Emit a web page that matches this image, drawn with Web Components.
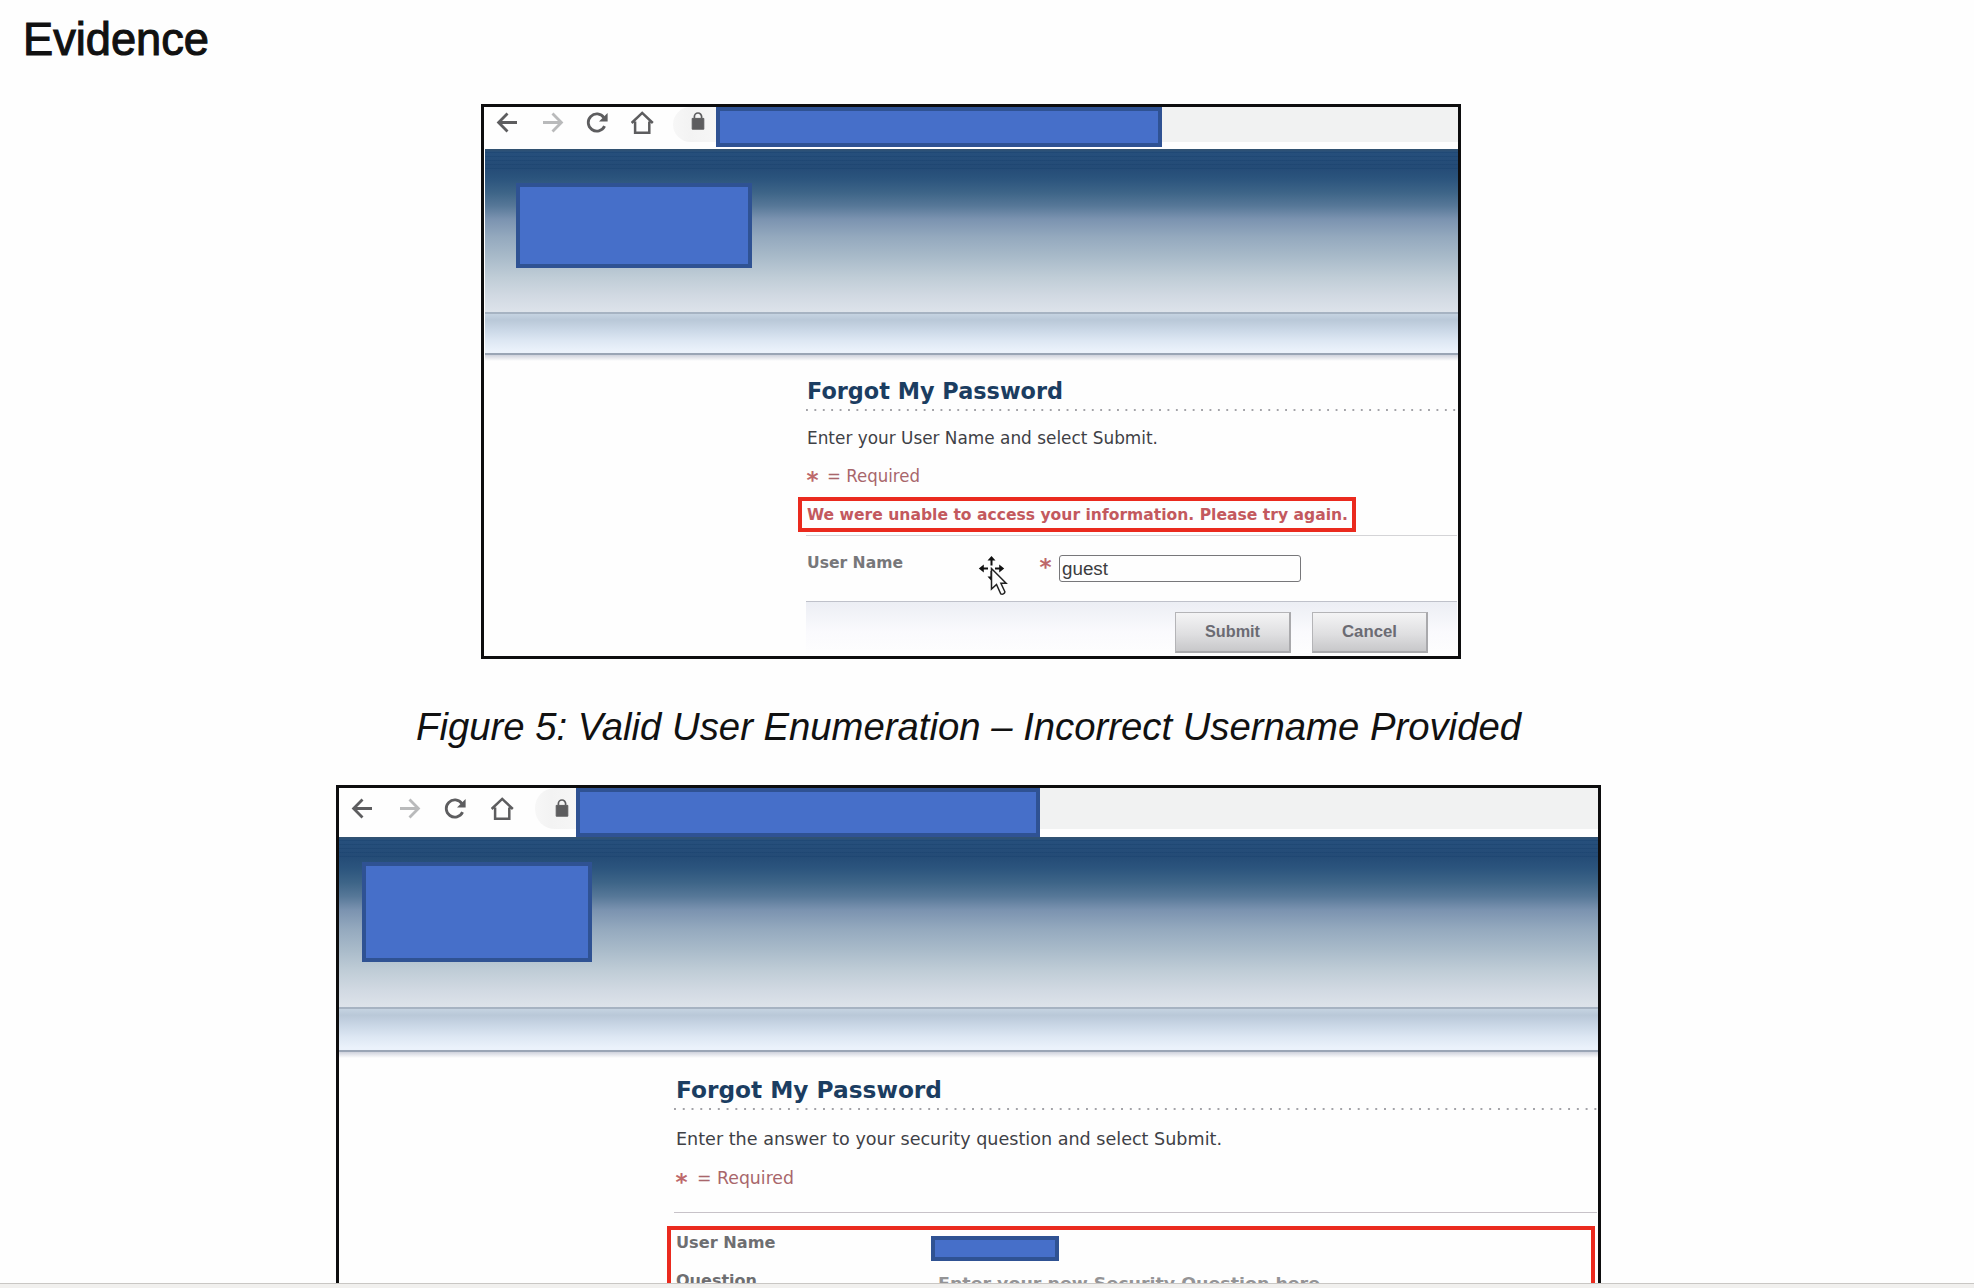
<!DOCTYPE html>
<html lang="en">
<head>
<meta charset="utf-8">
<title>Evidence</title>
<style>
html,body{margin:0;height:100%;overflow:hidden;background:#fefefe}
</style>
</head>
<body>
<report-page></report-page>
<script>
const define=(name,html,after)=>customElements.define(name,class extends HTMLElement{
  connectedCallback(){
    if(this.shadowRoot)return;
    this.attachShadow({mode:'open'}).innerHTML=typeof html==='function'?html(this):html;
    if(after)after(this);
  }
});

/* One line of text, condensed or widened to a given measure. */
define('fit-text',`<style>
:host{display:block;flex:none;white-space:nowrap;line-height:20px;height:20px}
span{display:inline-block;transform-origin:0 0}
</style><span><slot></slot></span>`,el=>{
  const w=+el.getAttribute('w'),s=el.shadowRoot.querySelector('span');
  el.style.width=w+'px';
  s.style.transform=`scaleX(${w/s.getBoundingClientRect().width})`;
});

define('redacted-box',`<style>
:host{display:block;flex:none;box-sizing:border-box;background:#466fc9;border:4px solid #2f5293}
</style>`);

const icons={
  back:'<path d="M21 11.5H3M11.5 2.5 2.6 11.5l8.9 9"/>',
  forward:'<path d="M2 11.5h18M11.5 2.5l8.9 9-8.9 9"/>',
  reload:'<path d="M18.6 15.2a8.6 8.6 0 1 1-.7-8.6"/><path d="M21.6 2v8.6H13z" fill="currentColor" stroke="none"/>',
  home:'<path d="M.6 12 11.2 1.9 21.8 12M4.1 10.5v11.3h14.2V10.5" stroke-width="2.5"/>',
  lock:'<path d="M6.2 9.4h11.6v10.8H6.2z" fill="currentColor" stroke-width="1"/><path d="M8.4 9V7.6a3.6 3.6 0 0 1 7.2 0V9" stroke-width="1.7"/>'
};
define('tool-icon',el=>`<style>
:host{display:block;flex:none;width:24px;height:24px;color:#5d5d5f}
:host([name=forward]){color:#b9babb}
svg{display:block;fill:none;stroke:currentColor;stroke-width:2.8}
</style><svg width="24" height="24" viewBox="0 0 24 24">${icons[el.getAttribute('name')]}</svg>`);

define('browser-bar',`<style>
:host{display:flex;align-items:flex-start;background:#fefefe;height:var(--bar-h)}
.nav{display:flex;gap:var(--gap);padding:var(--nav-top) 0 0 var(--nav-left);flex:none;box-sizing:border-box;width:var(--nav-w)}
.lock{flex:none;box-sizing:border-box;width:var(--lock-w);height:var(--pill-h);background:linear-gradient(90deg,#f7f7f7,#f3f3f3 40%,#f6f6f6);border-radius:20px 0 0 20px;padding:var(--lock-top) 0 0 var(--lock-left)}
redacted-box{width:var(--addr-w);height:var(--addr-h)}
.rest{flex:1;height:var(--pill-h);background:#f1f2f2}
</style>
<div class="nav"><tool-icon name="back"></tool-icon><tool-icon name="forward"></tool-icon><tool-icon name="reload"></tool-icon><tool-icon name="home"></tool-icon></div>
<div class="lock"><tool-icon name="lock"></tool-icon></div>
<redacted-box></redacted-box><div class="rest"></div>`);

define('site-banner',`<style>
:host{display:block;margin-left:var(--banner-left)}
.sky{box-sizing:border-box;height:var(--sky-h);padding:var(--logo-top) 0 0 var(--logo-left);
 background:repeating-linear-gradient(#17406c66 0 1px,transparent 1px 4px) 0 3px/100% 17px no-repeat,
 linear-gradient(#33526f 0,#264f7c 2%,#244b76 11%,#2b547d 18%,#3e6588 27%,#577898 35%,#7b93b0 43%,#94a9be 54%,#a8bac9 66%,#c0cdd7 79%,#d1d9e2 90%,#dde3ea)}
redacted-box{width:var(--logo-w);height:var(--logo-h)}
.band{height:var(--band-h);border:2px solid #9aa5b5;border-width:2px 0;border-top-color:#a6b3c2;background:linear-gradient(#c5d3e1 0,#b9c8d8 15%,#cbd8e7 42%,#dde7f3 68%,#ebf2fb 95%)}
.shade{height:6px;margin-bottom:-6px;background:linear-gradient(#cfd2dc,#fefefe)}
</style><div class="sky"><redacted-box></redacted-box></div><div class="band"></div><div class="shade"></div>`);

define('dotted-rule',`<style>
:host{display:block;height:2px;background:linear-gradient(90deg,#a3a3a8 2px,transparent 2px) 0 0/var(--dot) 2px repeat-x}
</style>`);

define('required-star',`<style>
:host{display:block;flex:none;width:12px;height:20px;font:bold 23px/20px "DejaVu Sans",sans-serif;color:#bd686b}
span{display:block;padding-top:4px}
</style><span>*</span>`);

define('required-note',`<style>
:host{display:flex;color:#a8666b;font-size:17px}
fit-text{margin-left:8px}
</style><required-star></required-star><fit-text></fit-text>`.replace('<fit-text></fit-text>','<slot></slot>'));

define('push-button',`<style>
:host{display:flex;justify-content:center;box-sizing:border-box;height:41px;padding-top:8px;border:1px solid #b4b4b7;border-right:2px solid #a9a9ac;border-bottom:2px solid #aaaaad;background:linear-gradient(#f4f4f5,#dfdfe1 55%,#c8c8ca);font:bold 17.3px "Liberation Sans",Arial,sans-serif;color:#6b6b73}
</style><fit-text w="55"><slot></slot></fit-text>`);

define('move-cursor',`<style>:host{display:block;position:absolute;left:494px;top:448px}svg{display:block}</style>
<svg width="30" height="42" viewBox="0 0 30 42"><g fill="none" stroke="#111" stroke-width="2"><path d="M13.5 5v5.5M4 13.5h6M17 13.5h6M13.5 16v8"/></g>
<path fill="#111" d="M13.5 1l4 4.6h-8zM.8 13.5l5-4v8zM26.2 13.5l-5-4v8zM13.5 26l-4-4.6h5z"/>
<path d="M13.5 13.5v20.5l5-4.6 4.2 9.4c1.8 1 4-.2 4.2-2l-4-8.6h5.2z" fill="#fff" stroke="#222" stroke-width="1.5"/></svg>`);

define('evidence-figure',`<style>
:host{display:block;box-sizing:border-box;position:relative;flex:none;border:3px solid #0d0d0e;font-family:"DejaVu Sans",Verdana,sans-serif}
</style><browser-bar></browser-bar><site-banner></site-banner><slot></slot>`);

define('unknown-user-form',`<style>
:host{display:block;padding:21px 1px 0 322.5px}
.title{font-weight:bold;font-size:22.6px;line-height:30px;height:30px;color:#1b3d61;margin-bottom:3px}
.alert{box-sizing:border-box;width:558px;height:35px;margin:11.8px 0 0 -8.5px;border:4px solid #ea2a1e;padding:4.2px 0 0 4.5px;font-weight:bold;font-size:15px;color:#c3595e}
.rule{height:1px;margin:2.7px 0 0 -1px;background:#d4d4d7}
.row{display:flex;height:65px}
.label{margin-top:17px;font-weight:bold;font-size:15px;color:#77777a}
.field{display:flex;box-sizing:border-box;width:242px;height:27px;margin:19px 0 0 7px;border:1.5px solid #77777a;border-radius:3px;padding:3px 0 0 2px;font:18px "Liberation Sans",Arial,sans-serif;color:#3c3c3e}
.foot{display:flex;gap:21px;height:44px;margin-left:-1px;padding:10px 0 0 369px;border-top:1px solid #bfc1ca;background:linear-gradient(#eceef4,#fafafd 55%,#fefefe)}
push-button{width:116px}
</style>
<fit-text class="title" w="256">Forgot My Password</fit-text>
<dotted-rule style="--dot:8.42px;margin-left:-1px"></dotted-rule>
<fit-text w="351" style="margin-top:17px;font-size:17px;color:#3e4146">Enter your User Name and select Submit.</fit-text>
<required-note style="margin-top:17.5px"><fit-text w="93" style="margin-left:8px">= Required</fit-text></required-note>
<div class="alert"><fit-text w="541">We were unable to access your information. Please try again.</fit-text></div>
<div class="rule"></div>
<div class="row"><fit-text class="label" w="96">User Name</fit-text><required-star style="margin:17px 0 0 137px"></required-star><div class="field"><fit-text w="46">guest</fit-text></div></div>
<div class="foot"><push-button>Submit</push-button><push-button>Cancel</push-button></div>
<move-cursor></move-cursor>`);

define('known-user-form',`<style>
:host{display:block;padding:23px 1px 0 337px}
.title{font-weight:bold;font-size:23.6px;line-height:30px;height:30px;color:#1b3d61;margin-bottom:3px}
.rule{height:1px;margin:23.5px 0 0 -1.5px;background:#c7c2c8}
.box{box-sizing:border-box;width:928px;height:100px;margin:13px 0 0 -8.5px;border:4px solid #ea2a1e;padding:3.5px 0 0 4.5px;font-weight:bold;font-size:15.6px;color:#6e6e71}
.row{display:flex}
redacted-box{width:128px;height:25px;margin:2.5px 0 0 155.5px}
</style>
<fit-text class="title" w="266">Forgot My Password</fit-text>
<dotted-rule style="--dot:8.77px;margin-left:-1.5px"></dotted-rule>
<fit-text w="546" style="margin-top:18.5px;font-size:17.6px;color:#3e4146">Enter the answer to your security question and select Submit.</fit-text>
<required-note style="margin-top:19.8px"><fit-text w="97" style="margin-left:9px">= Required</fit-text></required-note>
<div class="rule"></div>
<div class="box">
<div class="row"><fit-text w="99.5">User Name</fit-text><redacted-box></redacted-box></div>
<div class="row" style="margin-top:10.5px"><fit-text w="81">Question</fit-text><fit-text w="382" style="margin:2.5px 0 0 181px;color:#949496">Enter your new Security Question here</fit-text></div>
</div>`);

define('report-page',`<style>
:host{display:flex;flex-direction:column;width:1974px;height:1288px;overflow:hidden;font-family:"Liberation Sans",Arial,sans-serif;color:#111}
main{display:flex;flex-direction:column;align-items:flex-start;height:1283px;overflow:hidden;flex:none}
.heading{font-size:46px;line-height:60px;height:60px;margin:9px 0 35px 23px;-webkit-text-stroke:1.1px #111}
.f1{width:980px;height:555px;margin-left:481px;
 --bar-h:42px;--nav-left:12px;--nav-top:4px;--nav-w:189px;--gap:21px;--lock-w:43px;--lock-left:13px;--lock-top:2px;--pill-h:35px;--addr-w:446px;--addr-h:40px;
 --banner-left:1px;--sky-h:163px;--logo-left:31px;--logo-top:34px;--logo-w:236px;--logo-h:85px;--band-h:39px}
.caption{font-style:italic;font-size:39.3px;line-height:50px;height:50px;margin:41.5px 0 34.5px 416px}
.f2{width:1265px;height:600px;margin-left:335.5px;
 --bar-h:48.5px;--nav-left:12.5px;--nav-top:9px;--nav-w:196.5px;--gap:22.7px;--lock-w:41px;--lock-left:14.5px;--lock-top:8px;--pill-h:41px;--addr-w:464px;--addr-h:48.5px;
 --banner-left:0;--sky-h:170.5px;--logo-left:23px;--logo-top:25.5px;--logo-w:230px;--logo-h:100px;--band-h:41px}
footer{flex:none;height:5px;box-sizing:border-box;border-top:1.5px solid #c9c7c4;background:#f1f0ee}
</style>
<main>
<fit-text class="heading" w="186">Evidence</fit-text>
<evidence-figure class="f1"><unknown-user-form></unknown-user-form></evidence-figure>
<fit-text class="caption" w="1105">Figure 5: Valid User Enumeration – Incorrect Username Provided</fit-text>
<evidence-figure class="f2"><known-user-form></known-user-form></evidence-figure>
</main>
<footer></footer>`);
</script>
</body>
</html>
